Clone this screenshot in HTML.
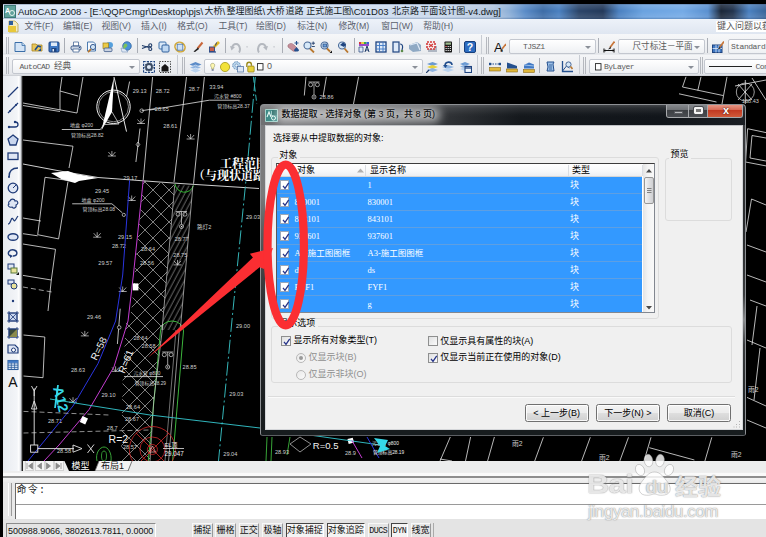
<!DOCTYPE html>
<html lang="zh-CN">
<head>
<meta charset="utf-8">
<title>AutoCAD 2008</title>
<style>
html,body{margin:0;padding:0;}
body{width:766px;height:537px;overflow:hidden;background:#000;position:relative;font-family:"Liberation Sans","Noto Sans CJK SC",sans-serif;font-size:9px;color:#000;}
div,span{box-sizing:border-box;}
.a{position:absolute;}
#title{position:absolute;left:2.5px;top:4px;width:763.5px;height:15px;background:linear-gradient(180deg,rgba(90,110,140,.55) 0,rgba(255,255,255,.12) 1.5px,rgba(255,255,255,0) 7px,rgba(255,255,255,.1) 13px,rgba(60,90,130,.35) 15px),linear-gradient(90deg,#dbe7f6 0,#d9e5f5 200px,#c9d8ec 440px,#b3c6de 490px,#8eb0d8 506px,#5a8cc8 522px,#3d6ca6 540px,#4a80c0 556px,#2a4468 576px,#23395a 600px,#4a80c0 616px,#6aa2e0 640px,#74aae6 680px,#5a90d0 705px,#1a2638 718px,#22344e 730px,#4a80c0 746px,#3a6498 763px);}
#title span{position:absolute;top:0;line-height:15px;font-size:9.5px;white-space:nowrap;color:#141a22;}
#title span.c{font-size:9px;}
#menu{position:absolute;left:2.5px;top:19px;width:763.5px;height:15px;background:linear-gradient(#edf2f9,#dfe6f1);}
#menu span{position:absolute;top:0;line-height:15px;font-size:8.8px;color:#59606c;white-space:nowrap;}
#tb{position:absolute;left:2.5px;top:34px;width:763.5px;height:42px;background:linear-gradient(#f6f7f9 0,#e9ebee 19px,#dcdfe4 20px,#f4f5f7 21px,#e6e8ec 40px,#c9ccd2 42px);}
.sepv{position:absolute;width:1px;background:#a9adb5;}
.grip{position:absolute;width:3px;border-left:1px solid #b5b8be;border-right:1px solid #b5b8be;}
.combo{position:absolute;background:linear-gradient(#ffffff,#eef0f3);border:1px solid #c3c7cf;border-radius:2px;font-family:"Liberation Mono","Noto Sans CJK SC",monospace;font-size:8px;letter-spacing:-.5px;color:#5a5a5a;white-space:nowrap;overflow:hidden;}
.combo b{font-weight:normal;font-size:8.6px;letter-spacing:0;}
.combo i{position:absolute;right:4px;top:6px;width:0;height:0;border-left:3px solid transparent;border-right:3px solid transparent;border-top:3px solid #8a8f98;}
#ltb{position:absolute;left:2.5px;top:76px;width:20.5px;height:395px;background:linear-gradient(90deg,#e8ebf0,#f3f5f8 14px,#fff 16px,#cfd3da 18px,#444 19px,#000 20px);}
#draw{position:absolute;left:23px;top:76px;width:743px;height:385px;background:#000;}
#tabs{position:absolute;left:23px;top:461px;width:743px;height:10px;background:#eceded;}
#sep{position:absolute;left:2.5px;top:471px;width:763px;height:11px;background:linear-gradient(#ececec 0,#efefef 2px,#fafafa 2.500px,#fafafa 4.500px,#8e8e8e 5px,#8e8e8e 6.500px,#f2f2f2 7px,#ececec 11px);}
#cmd{position:absolute;left:2.5px;top:482px;width:763px;height:37px;background:#e9e9e9;}
#status{position:absolute;left:2.5px;top:519px;width:763px;height:18px;background:#e4e4e4;}

#dlg{position:absolute;left:260px;top:104px;width:486px;height:331.5px;border-radius:4px 4px 3px 3px;border:1px solid #8d9094;border-bottom-color:#5c5f63;
 background:linear-gradient(180deg,rgba(255,255,255,.2) 0,rgba(255,255,255,.1) 3px,rgba(255,255,255,.02) 9px,rgba(255,255,255,0) 12px),linear-gradient(90deg,#707173 0,#6c6d70 24px,#4a4c50 120px,#2a2d31 200px,#14181c 260px,#11151a 400px,#1b1f24 486px);overflow:hidden;font-size:9px;}
#dlg .frameL{position:absolute;left:0;top:20px;width:3.5px;height:310px;background:linear-gradient(180deg,#7c7d7f 0,#7a7a7b 70px,#58595b 110px,#2c2e30 180px,#171b1d 300px);}
#dlg .frameR{position:absolute;right:0;top:20px;width:3.5px;height:310px;background:linear-gradient(180deg,#3c3d40 0,#2a2c2e 100px,#3a3c3e 170px,#8a8c8e 195px,#3a3c3e 220px,#1a1e20 300px);}
#dlg .frameB{position:absolute;left:0;bottom:0;width:486px;height:5px;background:#171c1e;}
#dcl{position:absolute;left:3.5px;top:20px;width:478px;height:305px;background:#f0f0f0;border:1px solid #d4d6d9;border-top-color:#c0c2c6;}
#dcl .t{position:absolute;white-space:nowrap;line-height:11px;font-size:9px;color:#000;}
#dcl .dis{color:#8f8f8f;}
.grp{position:absolute;border:1px solid #dcdcdc;border-radius:3px;}
.cb{position:absolute;width:10px;height:10px;border:1px solid #8e8f8f;background:linear-gradient(135deg,#dfe0e1,#fbfbfb);}
.cb.w{background:#fff;border-color:#9aa7b8;}
.cb svg{position:absolute;left:0;top:0;}
.rb{position:absolute;width:10px;height:10px;border:1px solid #b8b8b8;border-radius:50%;background:linear-gradient(135deg,#e8e8e8,#fbfbfb);}
.btn{position:absolute;height:18px;border:1px solid #707070;border-radius:2.5px;background:linear-gradient(#f3f3f3 0,#ececec 48%,#dedede 52%,#d0d0d0 100%);box-shadow:inset 0 0 0 1px rgba(255,255,255,.85);text-align:center;line-height:16px;font-size:9px;white-space:nowrap;color:#000;}
#lv{position:absolute;left:10.5px;top:36.5px;width:379px;height:150.5px;background:#fff;border:1px solid #828790;border-top-color:#3c3c3c;border-left-color:#5a5a5a;overflow:hidden;}
#lv .hd{position:absolute;left:0;top:0;width:365px;height:13px;background:linear-gradient(#fff,#f7f8fa 60%,#eceef2);border-bottom:1px solid #d5d5d5;}
#lv .row{position:absolute;left:0;width:364.5px;height:17px;background:#3399ff;border-bottom:1px solid #5e9fe2;}
#lv .row span{position:absolute;top:3px;line-height:11px;font-size:8.5px;color:#fff;white-space:nowrap;font-family:"Liberation Serif","Noto Sans CJK SC",serif;}
#lv .vl{position:absolute;top:13px;width:1px;height:137px;background:#5e9fe2;}
#lv .hl{position:absolute;top:1px;width:1px;height:11px;background:#dadde2;}
</style>
</head>
<body>
<div id="title"><span class="" style="left:15.4px">AutoCAD 2008 - [E:\QQPCmgr\Desktop\pjs\</span><span class="c" style="left:202.0px">大桥</span><span class="" style="left:220.0px">\</span><span class="c" style="left:224.0px">整理图纸</span><span class="" style="left:260.0px">\</span><span class="c" style="left:264.0px">大桥</span><span class="c" style="left:283.0px">道路</span><span class="c" style="left:303.8px">正式施工图</span><span class="" style="left:348.5px">\C01D03</span><span class="c" style="left:389.4px">北京路</span><span class="c" style="left:417.8px">平面设计图</span><span class="" style="left:462.5px">-v4.dwg]</span></div>
<div id="menu"><span style="left:22.0px">文件(F)</span><span style="left:60.5px">编辑(E)</span><span style="left:99.0px">视图(V)</span><span style="left:138.4px">插入(I)</span><span style="left:174.8px">格式(O)</span><span style="left:216.0px">工具(T)</span><span style="left:253.5px">绘图(D)</span><span style="left:294.8px">标注(N)</span><span style="left:335.9px">修改(M)</span><span style="left:378.7px">窗口(W)</span><span style="left:420.8px">帮助(H)</span></div>
<div id="tb"><div class="grip" style="left:3.5px;top:3.0px;height:17px"></div><svg class="a" style="left:11.5px;top:6.5px" width="12" height="12" viewBox="0 0 12 12"><path d="M1 1.5h7l3 3v6h-10z" fill="#d4e4f6" stroke="#3a6ea8"/><path d="M8 1.5v3h3" fill="#c5dbf2" stroke="#3a6ea8" stroke-width=".8"/></svg><svg class="a" style="left:28.0px;top:6.5px" width="12" height="12" viewBox="0 0 12 12"><path d="M1 3h4l1 1h5v6h-10z" fill="#e9c65a" stroke="#a88522" stroke-width=".8"/><path d="M4 9l3-4 3 1" fill="none" stroke="#1f4c8c" stroke-width="1.6"/><path d="M7 10l3 0 0-3z" fill="#1f4c8c"/></svg><svg class="a" style="left:45.0px;top:6.5px" width="12" height="12" viewBox="0 0 12 12"><rect x="1" y="1" width="10" height="10" rx="1" fill="#3f78c4" stroke="#1f4480"/><rect x="3" y="1.5" width="6" height="3.5" fill="#dfeaf8"/><rect x="3.5" y="7" width="5" height="4" fill="#1f4480"/><rect x="4.5" y="8" width="1.5" height="2.5" fill="#dfeaf8"/></svg><div class="sepv" style="left:61.5px;top:4.0px;height:15px"></div><svg class="a" style="left:67.0px;top:6.5px" width="12" height="12" viewBox="0 0 12 12"><path d="M3.5 1h5v4h-5z" fill="#fff" stroke="#4a6a98" stroke-width=".8"/><rect x="1" y="5" width="10" height="4" rx="1.5" fill="#c9d3e2" stroke="#3b5888"/><path d="M3 8h6v3h-6z" fill="#fff" stroke="#4a6a98" stroke-width=".8"/><circle cx="9.5" cy="6.5" r=".7" fill="#2c4e86"/></svg><svg class="a" style="left:83.0px;top:6.5px" width="12" height="12" viewBox="0 0 12 12"><path d="M1.5 1h6l2 2v7h-8z" fill="#f4f8fd" stroke="#3a6ea8" stroke-width=".9"/><circle cx="7" cy="6" r="2.6" fill="#cfe3f6" stroke="#3b5d91"/><path d="M5 8.2l-3 3" stroke="#b8772e" stroke-width="1.7"/></svg><svg class="a" style="left:99.5px;top:6.5px" width="12" height="12" viewBox="0 0 12 12"><ellipse cx="7.5" cy="4" rx="3.5" ry="3" fill="#55a0dd"/><rect x="1" y="2" width="5.5" height="5.5" fill="#edcb45" stroke="#9d7f1c" stroke-width=".7"/><rect x="2" y="7" width="8" height="3.6" rx="1" fill="#c9d3e2" stroke="#3b5888" stroke-width=".8"/></svg><svg class="a" style="left:117.0px;top:6.5px" width="12" height="12" viewBox="0 0 12 12"><circle cx="7" cy="5" r="4.3" fill="#4a93d8" stroke="#2a5a9a" stroke-width=".7"/><path d="M5 2.5c2 0 3 1.5 2 3s-2 1-2.5 3c-1.5-1-2-4 .5-6z" fill="#7dc25b"/><path d="M1 7l4 1 3 3h-6z" fill="#dfe9f6" stroke="#7b93b8" stroke-width=".6"/></svg><div class="sepv" style="left:134.0px;top:4.0px;height:15px"></div><svg class="a" style="left:138.0px;top:6.5px" width="12" height="12" viewBox="0 0 12 12"><path d="M1 4.5l7 2M1 7.5l7-2.5" stroke="#1f3b68" stroke-width="1.1" fill="none"/><circle cx="9.3" cy="4.3" r="1.5" fill="none" stroke="#1f3b68" stroke-width="1.1"/><circle cx="9.3" cy="8" r="1.5" fill="none" stroke="#1f3b68" stroke-width="1.1"/></svg><svg class="a" style="left:155.0px;top:6.5px" width="12" height="12" viewBox="0 0 12 12"><rect x="1" y="1" width="7" height="7" rx="1" fill="#dbe9f8" stroke="#3a6ea8"/><rect x="4" y="4" width="7" height="7" rx="1" fill="#bfd8f2" stroke="#2f5f9c"/></svg><svg class="a" style="left:171.5px;top:6.5px" width="12" height="12" viewBox="0 0 12 12"><ellipse cx="6" cy="6" rx="5.2" ry="4.6" fill="none" stroke="#d2a93a" stroke-width="1.6" transform="rotate(35 6 6)"/><rect x="3.2" y="3.2" width="5.6" height="6" fill="#cfe2f5" stroke="#4a76ac" stroke-width=".8"/></svg><svg class="a" style="left:189.0px;top:6.5px" width="12" height="12" viewBox="0 0 12 12"><path d="M10.5 1.5l-5 6" stroke="#c8663a" stroke-width="2"/><path d="M6 6.5l-4.5 4 1.5.5 4-3z" fill="#222"/></svg><svg class="a" style="left:205.5px;top:6.5px" width="12" height="12" viewBox="0 0 12 12"><path d="M11 1l-5 5" stroke="#e3b928" stroke-width="2.6"/><path d="M8.5 1.5l-1 3" stroke="#2b3e66" stroke-width="1"/><rect x="1.5" y="6" width="5" height="4.5" fill="#c85f4a" stroke="#2b4a86" stroke-width=".9"/><path d="M1 11h7" stroke="#2b4a86" stroke-width="1.2"/></svg><div class="sepv" style="left:222.0px;top:4.0px;height:15px"></div><svg class="a" style="left:227.0px;top:6.5px" width="12" height="12" viewBox="0 0 12 12"><path d="M2 7c1-5 7-6 8 1 0 2-.5 3-1 3.5" fill="none" stroke="#b4b8bf" stroke-width="2"/><path d="M0 5l5 1-3.5 3.5z" fill="#b4b8bf"/></svg><svg class="a" style="left:243.0px;top:6.5px" width="5" height="12" viewBox="0 0 12 12"><path d="M0 5h5l-2.500 3z" fill="#b4b8bf"/></svg><svg class="a" style="left:253.5px;top:6.5px" width="12" height="12" viewBox="0 0 12 12"><path d="M10 7c-1-5-7-6-8 1 0 2 .5 3 1 3.5" fill="none" stroke="#b4b8bf" stroke-width="2" transform="translate(0 0)"/><path d="M12 5l-5 1 3.5 3.5z" fill="#b4b8bf"/></svg><svg class="a" style="left:270.5px;top:6.5px" width="5" height="12" viewBox="0 0 12 12"><path d="M0 5h5l-2.500 3z" fill="#b4b8bf"/></svg><div class="sepv" style="left:279.5px;top:4.0px;height:15px"></div><svg class="a" style="left:284.0px;top:6.5px" width="12" height="12" viewBox="0 0 12 12"><path d="M1 4c2-2 4-2 6 0l3 3c1 2-2 4-4 3l-5-4z" fill="#c58f9a" stroke="#9a6470" stroke-width=".6"/><path d="M7 9l2.500-3 2.500 3c0 2-5 2-5 0z" fill="#24508e"/><path d="M9.500 0v4M7.500 2h4" stroke="#24508e" stroke-width="1.1"/></svg><svg class="a" style="left:300.5px;top:6.5px" width="12" height="12" viewBox="0 0 12 12"><circle cx="4.500" cy="4.500" r="3.500" fill="#d6e8f8" stroke="#4a6a98" stroke-width="1.100"/><path d="M7 7.500l4 4" stroke="#b8772e" stroke-width="1.800"/><path d="M8.500 2.200h3.500M10.200 .5v3.400M8.800 5.500h3" stroke="#1f3b68" stroke-width=".9"/></svg><svg class="a" style="left:317.0px;top:6.5px" width="12" height="12" viewBox="0 0 12 12"><circle cx="4.500" cy="4.500" r="3.500" fill="#d6e8f8" stroke="#4a6a98" stroke-width="1.100"/><rect x="3" y="3" width="3.500" height="3" fill="#6fa1d8" stroke="#1f4480" stroke-width=".7"/><path d="M7 7.500l3 3" stroke="#b8772e" stroke-width="1.800"/><path d="M9.500 12h2.500v-2.500z" fill="#111"/></svg><svg class="a" style="left:334.0px;top:6.5px" width="12" height="12" viewBox="0 0 12 12"><circle cx="5" cy="4.500" r="3.500" fill="#d6e8f8" stroke="#4a6a98" stroke-width="1.100"/><path d="M3 4l3-2.500 3 2-2 2.500z" fill="#1f4480"/><path d="M7.500 7.500l3.500 4" stroke="#b8772e" stroke-width="1.800"/></svg><div class="sepv" style="left:351.0px;top:4.0px;height:15px"></div><svg class="a" style="left:355.5px;top:6.5px" width="12" height="12" viewBox="0 0 12 12"><rect x="1" y="1" width="2.500" height="2" fill="#d43a3a"/><rect x="3.500" y="1" width="2.500" height="2" fill="#e8d23a"/><rect x="6" y="1" width="2.500" height="2" fill="#3aa84a"/><rect x="8.500" y="1" width="2.500" height="2" fill="#3a5fd4"/><rect x="1" y="3" width="10" height="2" fill="#9a4ac8"/><path d="M1 6h4v5h-4z" fill="#dfe9f6" stroke="#27467c" stroke-width=".7"/><path d="M7 11l2-6 2 6M7.800 9h2.500" fill="none" stroke="#1f3b68" stroke-width="1"/></svg><svg class="a" style="left:372.0px;top:6.5px" width="12" height="12" viewBox="0 0 12 12"><rect x="1" y="1" width="10" height="10" fill="#dfeaf8" stroke="#1f4480" stroke-width="1.300"/><path d="M4.500 1v10M8 1v10M1 4.500h10M1 8h10" stroke="#3f78c4" stroke-width=".9"/></svg><svg class="a" style="left:389.0px;top:6.5px" width="12" height="12" viewBox="0 0 12 12"><rect x="1" y="1" width="6" height="10" fill="#dfeaf8" stroke="#1f4480" stroke-width="1.200"/><path d="M8 3c3 0 3 3 2 6" fill="none" stroke="#1f4480" stroke-width="1.200"/><circle cx="10" cy="10" r="1.300" fill="#5a8a4a"/></svg><svg class="a" style="left:406.0px;top:6.5px" width="12" height="12" viewBox="0 0 12 12"><path d="M0 4l8-3 4 3v6l-8 1-4-3z" fill="#8fa9c4"/><path d="M1 4l7-2 3 7" stroke="#dfe9f6" stroke-width="1.200" fill="none"/></svg><svg class="a" style="left:423.0px;top:6.5px" width="12" height="12" viewBox="0 0 12 12"><rect x="2" y="5" width="9" height="6" fill="#aeb6c2"/><path d="M1 1h8v7h-8z" fill="#f8f0f0" stroke="#d23a3a" stroke-width="1.600" stroke-dasharray="2 1"/><path d="M3 3l4 3M7 3l-4 3" stroke="#d23a3a" stroke-width="1.300"/></svg><svg class="a" style="left:439.5px;top:6.5px" width="12" height="12" viewBox="0 0 12 12"><rect x="2.500" y=".5" width="7.500" height="11" rx=".8" fill="#1b1b1b"/><rect x="3.500" y="1.500" width="5.500" height="2.200" fill="#9ab88a"/><path d="M3.500 5.500h5.500M3.500 7.500h5.500M3.500 9.500h5.500" stroke="#d8d8d8" stroke-width="1" stroke-dasharray="1.300 .8"/><path d="M3.500 5.500h1.300" stroke="#d23a3a" stroke-width="1"/></svg><div class="sepv" style="left:456.0px;top:4.0px;height:15px"></div><svg class="a" style="left:461.0px;top:6.5px" width="12" height="12" viewBox="0 0 12 12"><rect x=".5" y=".5" width="11" height="11" rx="1.500" fill="#2d6cc0" stroke="#173f7c"/><text x="6" y="10" font-family="Liberation Sans,sans-serif" font-weight="bold" font-size="10.500" fill="#fff" text-anchor="middle">?</text></svg><div class="sepv" style="left:478.5px;top:1px;height:19px;background:#c8ccd3"></div><div class="grip" style="left:483.5px;top:3.0px;height:17px"></div><svg class="a" style="left:491.0px;top:6.5px" width="12" height="12" viewBox="0 0 12 12"><text x="0" y="10.500" font-family="Liberation Sans,sans-serif" font-size="13" fill="#111">A</text><path d="M12 3l-4 5" stroke="#c8763a" stroke-width="1.600"/><path d="M8 8l-2 2.500 3-1z" fill="#222"/></svg><div class="combo" style="left:506.0px;top:4.5px;width:87.0px;height:15px;line-height:13px;"><span style="position:absolute;left:13.5px;top:0">TJSZ1</span><i></i></div><div class="sepv" style="left:595.5px;top:4.0px;height:15px"></div><svg class="a" style="left:600.5px;top:6.5px" width="12" height="12" viewBox="0 0 12 12"><path d="M1 9.500h10M1 7.500v4M11 7.500v4" stroke="#111" stroke-width="1.100"/><path d="M1 9.500l2-1v2zM11 9.500l-2-1v2z" fill="#111"/><path d="M11.500 .5l-4.500 6" stroke="#c8763a" stroke-width="1.700"/><path d="M7.500 5.500l-2.500 3 3-1z" fill="#222"/></svg><div class="combo" style="left:615.5px;top:4.5px;width:87.0px;height:15px;line-height:13px;"><span style="position:absolute;left:13.5px;top:0"><b>尺寸标注－平面</b></span><i></i></div><div class="sepv" style="left:704.5px;top:4.0px;height:15px"></div><svg class="a" style="left:709.0px;top:6.5px" width="12" height="12" viewBox="0 0 12 12"><rect x=".5" y="4" width="9.500" height="7.500" fill="#3f78c4" stroke="#1f4480"/><path d="M.5 7.500h9.500M4 4v7.500M7 4v7.500" stroke="#dfeaf8" stroke-width=".8"/><path d="M12 .5l-4.500 6" stroke="#c8763a" stroke-width="1.700"/><path d="M8 5.500l-2.500 3 3-1z" fill="#222"/></svg><div class="combo" style="left:725.0px;top:4.5px;width:60.0px;height:15px;line-height:13px;"><span style="position:absolute;left:2.5px;top:0">Standard</span><i></i></div><div class="grip" style="left:3.5px;top:23.0px;height:17px"></div><div class="combo" style="left:9.0px;top:24.5px;width:128.0px;height:15px;line-height:13px;"><span style="position:absolute;left:7.0px;top:0">AutoCAD <b>经典</b></span><i></i></div><svg class="a" style="left:140.0px;top:26.5px" width="12" height="12" viewBox="0 0 12 12"><rect x=".5" y=".5" width="11" height="11" fill="#dfe9f6" stroke="#1f4480" stroke-width="1.200" stroke-dasharray="2.200 1.100"/><circle cx="6" cy="6" r="3" fill="none" stroke="#3a4a62" stroke-width="1.800"/><circle cx="6" cy="6" r="4.300" fill="none" stroke="#3a4a62" stroke-width="1" stroke-dasharray="1.500 1.500"/></svg><svg class="a" style="left:156.5px;top:26.5px" width="12" height="12" viewBox="0 0 12 12"><rect x=".5" y=".5" width="11" height="11" fill="#e9edf2" stroke="#333" stroke-width="1" stroke-dasharray="1.300 1.300"/><path d="M2.500 6l3.500-3 3.500 3v4.500h-7z" fill="#151515"/></svg><div class="sepv" style="left:174.5px;top:21px;height:19px;background:#c8ccd3"></div><div class="grip" style="left:179.0px;top:23.0px;height:17px"></div><svg class="a" style="left:186.5px;top:26.5px" width="13" height="12" viewBox="0 0 12 12"><path d="M6 1l6 2.500-6 2.500-6-2.500z" fill="#5c8cc8"/><path d="M6 4l6 2.500-6 2.500-6-2.500z" fill="#8fb4e0" stroke="#fff" stroke-width=".5"/><path d="M6 7l6 2.500-6 2.500-6-2.500z" fill="#b9d2ee" stroke="#fff" stroke-width=".5"/></svg><div class="combo" style="left:201.5px;top:24.5px;width:219.0px;height:15px;line-height:13px;"><span style="position:absolute;left:62.0px;top:0"><b style="font-family:Liberation Sans,sans-serif;font-size:9px">0</b></span><svg class="a" style="left:5.0px;top:1.0px" width="8" height="12" viewBox="0 0 12 12"><path d="M4 0.500c-4 0-3.500 4.500-1.500 6.500v2h3v-2c2-2 2.500-6.500-1.500-6.500z" fill="#fdf7b0" stroke="#8a8a5a" stroke-width=".8"/><rect x="2.500" y="9.500" width="3" height="2" fill="#5a6a8a"/></svg><svg class="a" style="left:15.0px;top:1.0px" width="11" height="12" viewBox="0 0 12 12"><circle cx="5.500" cy="6" r="5" fill="#f2e23a" stroke="#a89a1a" stroke-width=".9"/></svg><svg class="a" style="left:27.0px;top:1.0px" width="12" height="12" viewBox="0 0 12 12"><circle cx="4.500" cy="4.500" r="3.800" fill="#bcd6ec" stroke="#5a86b4" stroke-width="1" stroke-dasharray="1.500 1"/><circle cx="4.500" cy="4.500" r="1.500" fill="#eaf2fa" stroke="#5a86b4" stroke-width=".6"/><rect x="5.500" y="5.500" width="6" height="5.500" fill="#dfe9f6" stroke="#5a7aa8" stroke-width=".8"/></svg><svg class="a" style="left:40.0px;top:1.0px" width="11" height="12" viewBox="0 0 12 12"><path d="M2 6v-2.500c0-3.500 5-3.500 5 0v1" fill="none" stroke="#9a8a1a" stroke-width="1.500"/><rect x="3" y="5" width="7" height="6.500" rx="1" fill="#e8d23a" stroke="#8a7a1a" stroke-width=".8"/></svg><svg class="a" style="left:52.0px;top:1.0px" width="9" height="12" viewBox="0 0 12 12"><rect x=".5" y="1.500" width="7.500" height="8.500" fill="#fff" stroke="#111" stroke-width="1.100"/></svg><i></i></div><svg class="a" style="left:423.0px;top:26.5px" width="12" height="12" viewBox="0 0 12 12"><path d="M6.500 1l5.500 2-5.500 2-5.500-2z" fill="#6a9ad2"/><path d="M6.500 4l5.500 2-5.500 2-5.500-2z" fill="#e8d23a"/><path d="M6.500 7l5.500 2-5.500 2-5.500-2z" fill="#8fb4e0"/><path d="M0 12l3-3" stroke="#1f3b68" stroke-width="1.200"/></svg><svg class="a" style="left:439.5px;top:26.5px" width="12" height="12" viewBox="0 0 12 12"><path d="M6 4l6 2-6 2-6-2z" fill="#8fb4e0"/><path d="M6 7l6 2-6 2-6-2z" fill="#b9d2ee"/><path d="M3 5c0-5 7-5 7-1" fill="none" stroke="#1f4c8c" stroke-width="1.600"/><path d="M1 4l2.500 3 2-3z" fill="#1f4c8c"/></svg><svg class="a" style="left:457.0px;top:26.5px" width="12" height="12" viewBox="0 0 12 12"><path d="M5 1l5 2-5 2-5-2z" fill="#6a9ad2"/><path d="M5 3.500l5 2-5 2-5-2z" fill="#8fb4e0"/><path d="M5 6l5 2-5 2-5-2z" fill="#b9d2ee"/><rect x="5" y="5.500" width="6.500" height="6" fill="#eef4fb" stroke="#1f4480" stroke-width="1.100"/><path d="M5 7h6.500" stroke="#1f4480" stroke-width="1.300"/></svg><div class="sepv" style="left:474.5px;top:21px;height:19px;background:#c8ccd3"></div><div class="grip" style="left:478.0px;top:23.0px;height:17px"></div><svg class="a" style="left:486.5px;top:26.5px" width="12" height="12" viewBox="0 0 12 12"><path d="M1 3h10" stroke="#1f4c8c" stroke-width="1.200" stroke-dasharray="1.500 1"/><rect x="0" y="1.800" width="2.200" height="2.400" fill="#1f4c8c"/><rect x="9.800" y="1.800" width="2.200" height="2.400" fill="#1f4c8c"/><rect x="0.500" y="6.500" width="11" height="3.500" fill="#e0b83a" stroke="#8a6a1a" stroke-width=".6"/></svg><svg class="a" style="left:503.5px;top:26.5px" width="12" height="12" viewBox="0 0 12 12"><path d="M1 1.500l10 3.500v2.500h-10z" fill="#24508e"/><rect x="0.500" y="8" width="11" height="3" fill="#e0b83a" stroke="#8a6a1a" stroke-width=".6"/></svg><svg class="a" style="left:520.0px;top:26.5px" width="12" height="12" viewBox="0 0 12 12"><path d="M1 4l5-2.500 5 2v4h-10z" fill="#3f78c4"/><path d="M1 4l10 1" stroke="#9cc0e8" stroke-width="1"/><rect x="0.500" y="8.500" width="11" height="3" fill="#e0b83a" stroke="#8a6a1a" stroke-width=".6"/></svg><div class="sepv" style="left:536.5px;top:24.0px;height:15px"></div><svg class="a" style="left:541.0px;top:26.5px" width="12" height="12" viewBox="0 0 12 12"><path d="M3 1h7l-1 2 1 7h-7l1-4z" fill="#9cc0e8" stroke="#24508e" stroke-width="1"/><path d="M5 4h3M5 6h3M5 8h3" stroke="#24508e" stroke-width=".8"/></svg><svg class="a" style="left:558.0px;top:26.5px" width="12" height="12" viewBox="0 0 12 12"><path d="M1.500 0v10.500h10.500" fill="none" stroke="#24508e" stroke-width="1.300"/><path d="M1.500 10l4-5 3 2" fill="none" stroke="#24508e" stroke-width="1"/><circle cx="7.500" cy="3.500" r="2.600" fill="#d6e8f8" stroke="#4a6a98" stroke-width="1"/><path d="M9.500 5.500l2 2.500" stroke="#b8772e" stroke-width="1.600"/></svg><div class="sepv" style="left:576.5px;top:21px;height:19px;background:#c8ccd3"></div><div class="grip" style="left:580.0px;top:23.0px;height:17px"></div><div class="combo" style="left:586.0px;top:24.5px;width:110.0px;height:15px;line-height:13px;"><span style="position:absolute;left:14.5px;top:0">ByLayer</span><svg class="a" style="left:5.0px;top:1.0px" width="9" height="12" viewBox="0 0 12 12"><rect x=".5" y="1.500" width="7.500" height="8.500" fill="#fff" stroke="#111" stroke-width="1.100"/></svg><i></i></div><div class="grip" style="left:697.0px;top:23.0px;height:17px"></div><div class="combo" style="left:701.0px;top:24.5px;width:80.0px;height:15px;line-height:13px;"><span style="position:absolute;left:51.0px;top:0">Con</span><div class="a" style="left:4px;top:6px;width:43px;height:1px;background:#222"></div><i></i></div></div>
<div class="a" style="left:716px;top:21px;width:50px;height:11px;background:#fff;font-size:9px;line-height:11px;color:#555;white-space:nowrap;overflow:hidden;padding-left:1px">键入问题以获取帮助</div>
<svg class="a" style="left:8px;top:20px" width="12" height="13" viewBox="0 0 12 13"><path d="M1 1h6l3 3v8h-9z" fill="#f4ecc0" stroke="#b8a24a" stroke-width=".8"/><rect x="1" y="1" width="4" height="4" fill="#2d5d9c"/><rect x="0" y="6" width="8" height="6" fill="#e8c83a"/></svg>
<svg class="a" style="left:4px;top:5px" width="12" height="13" viewBox="0 0 12 13"><rect width="12" height="13" fill="#3d7a78"/><rect x="1" y="1" width="10" height="11" fill="#5fa29c"/><text x="1" y="8" font-size="7" font-family="Liberation Sans,sans-serif" fill="#fff" font-weight="bold">A</text><circle cx="8" cy="8" r="2.500" fill="none" stroke="#e8f4f0" stroke-width="1"/></svg>
<div id="ltb"><svg class="a" style="left:4px;top:9.6px" width="12" height="12" viewBox="0 0 12 12"><path d="M1 11l10-10" stroke="#1f3b78" stroke-width="1.300"/></svg><svg class="a" style="left:4px;top:25.7px" width="12" height="12" viewBox="0 0 12 12"><path d="M1 11l10-10" stroke="#1f3b78" stroke-width="1.300"/><circle cx="3" cy="9" r="1" fill="#1f3b78"/><circle cx="9" cy="3" r="1" fill="#1f3b78"/></svg><svg class="a" style="left:4px;top:41.8px" width="12" height="12" viewBox="0 0 12 12"><path d="M2 9h6c4 0 4-5 0-5" fill="none" stroke="#1f3b78" stroke-width="1.300"/><circle cx="2" cy="9" r="1.200" fill="#1f3b78"/><circle cx="8" cy="4" r="1.200" fill="#1f3b78"/></svg><svg class="a" style="left:4px;top:57.9px" width="12" height="12" viewBox="0 0 12 12"><path d="M6 1l5 4-2 6h-6l-2-6z" fill="#c9d6ee" stroke="#1f3b78" stroke-width="1.300"/></svg><svg class="a" style="left:4px;top:74.0px" width="12" height="12" viewBox="0 0 12 12"><rect x="1" y="3" width="10" height="6.500" fill="#dfe6f4" stroke="#1f3b78" stroke-width="1.300"/></svg><svg class="a" style="left:4px;top:90.1px" width="12" height="12" viewBox="0 0 12 12"><path d="M2 11c0-6 3-9 9-9" fill="none" stroke="#1f3b78" stroke-width="1.400"/><circle cx="2" cy="11" r="1" fill="#1f3b78"/></svg><svg class="a" style="left:4px;top:106.2px" width="12" height="12" viewBox="0 0 12 12"><circle cx="6" cy="6" r="4.800" fill="#dfe6f4" stroke="#1f3b78" stroke-width="1.300"/><path d="M6 6l3-3" stroke="#1f3b78" stroke-width="1"/></svg><svg class="a" style="left:4px;top:122.3px" width="12" height="12" viewBox="0 0 12 12"><path d="M3 3c1-3 5-2 5 0 3-1 4 3 1 4 1 3-3 4-4 2-3 1-5-2-3-3-1-1 0-3 1-3z" fill="#dfe6f4" stroke="#1f3b78" stroke-width="1.100"/></svg><svg class="a" style="left:4px;top:138.4px" width="12" height="12" viewBox="0 0 12 12"><path d="M1 10c3 0 3-8 5-5s1 3 5-3" fill="none" stroke="#1f3b78" stroke-width="1.200"/></svg><svg class="a" style="left:4px;top:154.5px" width="12" height="12" viewBox="0 0 12 12"><ellipse cx="6" cy="6" rx="5" ry="3.300" fill="#dfe6f4" stroke="#1f3b78" stroke-width="1.400"/></svg><svg class="a" style="left:4px;top:170.6px" width="12" height="12" viewBox="0 0 12 12"><path d="M3 9c-4-3 0-7 4-6s4 6-1 6" fill="none" stroke="#1f3b78" stroke-width="1.400"/><path d="M3 7.500l0 3.500 3-2z" fill="#1f3b78"/></svg><svg class="a" style="left:4px;top:186.7px" width="12" height="12" viewBox="0 0 12 12"><rect x="1" y="1" width="6" height="5" fill="#dfe6f4" stroke="#1f3b78"/><rect x="4" y="5" width="6" height="5" fill="#e8e29a" stroke="#5a7a3a"/><path d="M9 12h3v-3z" fill="#111"/></svg><svg class="a" style="left:4px;top:202.8px" width="12" height="12" viewBox="0 0 12 12"><rect x="1" y="1" width="6" height="4" fill="#dfe6f4" stroke="#1f3b78"/><circle cx="7" cy="7" r="3" fill="#e8e29a" stroke="#1f3b78"/></svg><svg class="a" style="left:4px;top:218.9px" width="12" height="12" viewBox="0 0 12 12"><circle cx="6" cy="6" r="1.200" fill="#1f3b78"/></svg><svg class="a" style="left:4px;top:235.0px" width="12" height="12" viewBox="0 0 12 12"><rect x="2" y="2" width="8" height="8" fill="#c9d6ee" stroke="#1f3b78"/><path d="M2 2l8 8M10 2l-8 8M0 2h12M0 10h12M2 0v12M10 0v12" stroke="#1f3b78" stroke-width=".8"/></svg><svg class="a" style="left:4px;top:251.1px" width="12" height="12" viewBox="0 0 12 12"><rect x="2" y="2" width="8" height="8" fill="#3a4a3a" stroke="#1f3b78"/><path d="M0 2h12M0 10h12M2 0v12M10 0v12" stroke="#1f3b78" stroke-width=".8"/><path d="M2 10l8-8v8z" fill="#8a8a4a"/></svg><svg class="a" style="left:4px;top:267.2px" width="12" height="12" viewBox="0 0 12 12"><path d="M1 2h7l3 3v5h-10z" fill="#dfe6f4" stroke="#1f3b78" stroke-width="1.200"/><circle cx="6.500" cy="7" r="2" fill="#fff" stroke="#1f3b78"/></svg><svg class="a" style="left:4px;top:283.3px" width="12" height="12" viewBox="0 0 12 12"><rect x="1" y="1.500" width="10" height="9" fill="#dfeaf8" stroke="#2d5d9c" stroke-width="1.100"/><path d="M1 4h10M1 6.200h10M1 8.400h10M4.300 1.500v9M7.600 1.500v9" stroke="#2d5d9c" stroke-width=".8"/><rect x="1" y="1.500" width="10" height="2.300" fill="#3f78c4"/></svg><svg class="a" style="left:4px;top:299.4px" width="12" height="12" viewBox="0 0 12 12"><text x="6" y="11.500" font-family="Liberation Sans,sans-serif" font-size="14" fill="#111" text-anchor="middle">A</text></svg></div>
<div id="draw"><svg width="743" height="385" viewBox="23 76 743 385" style="position:absolute;left:0;top:0" font-family="Liberation Sans,Noto Sans CJK SC,sans-serif"><defs><pattern id="xh" width="16" height="16" patternUnits="userSpaceOnUse" patternTransform="translate(1 6)"><path d="M0 0l16 16M16 0l-16 16" stroke="#b4b4b4" stroke-width=".7" fill="none"/></pattern><pattern id="dh" width="4.500" height="4.500" patternUnits="userSpaceOnUse" patternTransform="rotate(-62)"><path d="M0 2h4.500" stroke="#9c9c9c" stroke-width=".65"/></pattern></defs><polygon points="143,181 175,184.500 162,330 154,401 150,461 121,461 122.700,378 126,321 131.400,311" fill="url(#xh)"/><polygon points="175,184.500 193,186 180.300,330 162,330" fill="url(#dh)"/><polyline points="62.0,77.0 60.0,91.0 78.0,96.0" fill="none" stroke="#e6e6e6" stroke-width="0.8" /><polyline points="83.0,77.0 77.0,113.0" fill="none" stroke="#e6e6e6" stroke-width="0.8" /><polyline points="60.0,91.0 60.0,110.0" fill="none" stroke="#e6e6e6" stroke-width="0.8" /><polyline points="23.0,103.0 77.0,113.0" fill="none" stroke="#e6e6e6" stroke-width="0.8" /><polyline points="23.0,105.5 60.0,111.5" fill="none" stroke="#e6e6e6" stroke-width="0.8" /><polyline points="23.0,140.0 73.0,146.2 69.0,168.0" fill="none" stroke="#e6e6e6" stroke-width="0.8" /><polyline points="23.0,164.0 60.0,171.0 98.0,177.5 180.0,183.5 259.0,188.5" fill="none" stroke="#e6e6e6" stroke-width="0.9" /><circle cx="113.500" cy="106.800" r="16.700" fill="none" stroke="#f2f2f2" stroke-width="1"/><circle cx="113.500" cy="106.800" r="15" fill="none" stroke="#e0e0e0" stroke-width=".6"/><polygon points="114,77 101.400,130.500 112,112" fill="#fff"/><polyline points="114.0,77.0 126.5,131.6" fill="none" stroke="#fff" stroke-width="0.9" /><polyline points="112.0,112.0 119.0,124.0 105.0,124.5" fill="none" stroke="#eee" stroke-width="0.7" /><polyline points="129.6,81.5 126.5,97.0" fill="none" stroke="#e6e6e6" stroke-width="0.8" /><polygon points="51,173 68,171 76,174 98,178 79,181 75,183 62,179.500" fill="#fff"/><polyline points="152.6,77.0 143.2,180.0" fill="none" stroke="#e6e6e6" stroke-width="0.8" /><polyline points="186.5,77.0 174.0,182.0" fill="none" stroke="#e6e6e6" stroke-width="0.8" /><polyline points="204.4,77.0 193.5,183.7" fill="none" stroke="#e6e6e6" stroke-width="0.8" /><polyline points="141.7,110.7 155.7,108.6" fill="none" stroke="#e6e6e6" stroke-width="0.8" /><circle cx="141.700" cy="110.700" r="1.800" fill="none" stroke="#ddd" stroke-width=".7"/><polyline points="140.0,128.5 135.9,162.0" fill="none" stroke="#e6e6e6" stroke-width="0.8" /><path d="M138 142l1.800 2.500-1.800 2.500-1.800-2.500z" fill="none" stroke="#ddd" stroke-width=".7"/><polyline points="150.0,110.0 209.3,100.2 239.5,100.2" fill="none" stroke="#e6e6e6" stroke-width="0.8" /><text x="70.0" y="127.0" font-size="5" fill="#cfcfcf" >地盒 φ200</text><polyline points="61.8,129.5 100.4,129.5 104.0,124.0" fill="none" stroke="#e6e6e6" stroke-width="0.8" /><text x="71.0" y="137.0" font-size="5" fill="#cfcfcf" >管顶标高28.82</text><text x="81.6" y="201.6" font-size="5" fill="#cfcfcf" >地盒 φ200</text><polyline points="72.2,203.8 111.9,203.8 122.3,212.8" fill="none" stroke="#e6e6e6" stroke-width="0.8" /><text x="82.6" y="211.0" font-size="5" fill="#cfcfcf" >管顶标高28.08</text><circle cx="123.800" cy="214.900" r="1.600" fill="none" stroke="#ddd" stroke-width=".7"/><text x="214.0" y="98.0" font-size="5" fill="#cfcfcf" >污水管 #800</text><text x="217.3" y="108.3" font-size="5" fill="#cfcfcf" >管顶标高28.37</text><text x="132.7" y="93.0" font-size="5.6" fill="#cfcfcf" >29.13</text><text x="155.7" y="93.0" font-size="5.6" fill="#cfcfcf" >28.72</text><text x="188.7" y="91.4" font-size="5.6" fill="#cfcfcf" >28.7</text><text x="209.3" y="89.0" font-size="5.6" fill="#cfcfcf" >33.94</text><text x="154.8" y="111.4" font-size="5.6" fill="#cfcfcf" >28.65</text><text x="163.3" y="127.6" font-size="5.6" fill="#cfcfcf" >28.61</text><text x="123.3" y="180.4" font-size="5.6" fill="#cfcfcf" >29.17</text><text x="95.0" y="192.5" font-size="5.6" fill="#cfcfcf" >29.45</text><text x="118.0" y="239.0" font-size="5.6" fill="#cfcfcf" >29.15</text><text x="111.9" y="248.0" font-size="5.6" fill="#cfcfcf" >28.72</text><text x="141.0" y="251.0" font-size="5.6" fill="#cfcfcf" >28.64</text><text x="98.3" y="265.0" font-size="5.6" fill="#cfcfcf" >29.57</text><text x="140.0" y="265.0" font-size="5.6" fill="#cfcfcf" >28.56</text><text x="246.0" y="219.0" font-size="5.6" fill="#cfcfcf" >29.03</text><text x="174.7" y="240.7" font-size="5.6" fill="#cfcfcf" >28.77</text><text x="173.3" y="257.0" font-size="5.6" fill="#cfcfcf" >28.75</text><text x="197.0" y="229.0" font-size="5.6" fill="#cfcfcf" >路灯2</text><text x="236.0" y="328.0" font-size="5.6" fill="#cfcfcf" >29.00</text><text x="229.3" y="396.2" font-size="5.6" fill="#cfcfcf" >29.03</text><text x="223.3" y="456.0" font-size="5.6" fill="#cfcfcf" >29.04</text><text x="87.0" y="318.8" font-size="5.6" fill="#cfcfcf" >29.46</text><text x="71.0" y="372.0" font-size="5.6" fill="#cfcfcf" >28.63</text><text x="48.0" y="423.0" font-size="5.6" fill="#cfcfcf" >28.71</text><text x="101.5" y="397.4" font-size="5.6" fill="#cfcfcf" >29.10</text><text x="106.8" y="430.0" font-size="5.6" fill="#cfcfcf" >28.7</text><text x="57.0" y="453.0" font-size="5.6" fill="#cfcfcf" >28.58</text><text x="182.6" y="369.2" font-size="5.6" fill="#cfcfcf" >28.85</text><text x="133.5" y="340.3" font-size="5.6" fill="#cfcfcf" >28.64</text><text x="141.6" y="347.6" font-size="5.6" fill="#cfcfcf" >28.58</text><text x="125.0" y="421.0" font-size="5.6" fill="#cfcfcf" >28.67</text><text x="123.0" y="449.0" font-size="5.6" fill="#cfcfcf" >28.57</text><text x="126.0" y="409.0" font-size="5.6" fill="#cfcfcf" >28.64</text><g transform="translate(141.0 121.0)"><path d="M-4 2.500h8M0 2.500v-5M0 2.500l-3.500-4M0 2.500l3.500-4" stroke="#d8d8d8" stroke-width=".7" fill="none"/></g><g transform="translate(111.9 153.5)"><path d="M-4 2.500h8M0 2.500v-5M0 2.500l-3.500-4M0 2.500l3.500-4" stroke="#d8d8d8" stroke-width=".7" fill="none"/></g><g transform="translate(190.6 136.5)"><path d="M-4 2.500h8M0 2.500v-5M0 2.500l-3.500-4M0 2.500l3.500-4" stroke="#d8d8d8" stroke-width=".7" fill="none"/></g><g transform="translate(131.7 198.0)"><path d="M-4 2.500h8M0 2.500v-5M0 2.500l-3.500-4M0 2.500l3.500-4" stroke="#d8d8d8" stroke-width=".7" fill="none"/></g><g transform="translate(97.2 234.7)"><path d="M-4 2.500h8M0 2.500v-5M0 2.500l-3.500-4M0 2.500l3.500-4" stroke="#d8d8d8" stroke-width=".7" fill="none"/></g><g transform="translate(177.5 262.4)"><path d="M-4 2.500h8M0 2.500v-5M0 2.500l-3.500-4M0 2.500l3.500-4" stroke="#d8d8d8" stroke-width=".7" fill="none"/></g><g transform="translate(122.7 289.0)"><path d="M-4 2.500h8M0 2.500v-5M0 2.500l-3.500-4M0 2.500l3.500-4" stroke="#d8d8d8" stroke-width=".7" fill="none"/></g><g transform="translate(84.8 333.4)"><path d="M-4 2.500h8M0 2.500v-5M0 2.500l-3.500-4M0 2.500l3.500-4" stroke="#d8d8d8" stroke-width=".7" fill="none"/></g><g transform="translate(115.6 368.9)"><path d="M-4 2.500h8M0 2.500v-5M0 2.500l-3.500-4M0 2.500l3.500-4" stroke="#d8d8d8" stroke-width=".7" fill="none"/></g><g transform="translate(73.0 399.7)"><path d="M-4 2.500h8M0 2.500v-5M0 2.500l-3.500-4M0 2.500l3.500-4" stroke="#d8d8d8" stroke-width=".7" fill="none"/></g><polyline points="45.0,177.3 37.7,234.7 58.6,238.9 68.0,181.5" fill="none" stroke="#e6e6e6" stroke-width="0.8" /><polyline points="45.0,177.3 68.0,180.4" fill="none" stroke="#e6e6e6" stroke-width="0.8" /><polyline points="23.0,218.0 40.9,221.0" fill="none" stroke="#e6e6e6" stroke-width="0.8" /><polyline points="23.0,233.7 37.7,235.8" fill="none" stroke="#e6e6e6" stroke-width="0.8" /><polyline points="23.0,244.0 55.5,249.3 51.3,280.0 23.0,275.4" fill="none" stroke="#e6e6e6" stroke-width="0.8" /><polyline points="51.3,280.0 48.0,311.0" fill="none" stroke="#e6e6e6" stroke-width="0.8" /><polyline points="23.0,287.0 52.0,292.0" fill="none" stroke="#ddd" stroke-width="0.7" stroke-dasharray="5 3"/><polyline points="23.5,335.0 44.8,337.0 43.0,377.7 23.5,376.0" fill="none" stroke="#e6e6e6" stroke-width="0.8" /><polyline points="129.6,180.4 122.7,275.0 115.6,321.0 98.0,363.6 73.0,406.0 41.0,445.0 28.0,461.0" fill="none" stroke="#2a35e0" stroke-width="1" /><polyline points="143.2,180.4 133.4,275.0 128.0,321.0 113.9,367.0 89.0,409.6 59.0,445.0 44.0,461.0" fill="none" stroke="#c43cd0" stroke-width="1" /><path d="M175 184a9.500 9.500 0 0 0 18.500 1.500" fill="none" stroke="#2fb52f" stroke-width="1"/><path d="M148.300 461L160.500 331a11.500 10 0 0 1 23 0L172.600 461" fill="none" stroke="#3db53d" stroke-width="1"/><polyline points="163.0,324.0 153.7,401.0 150.0,461.0" fill="none" stroke="#ccc" stroke-width="0.7" /><polyline points="179.3,330.8 168.6,461.0" fill="none" stroke="#ccc" stroke-width="0.7" /><polyline points="176.0,330.0 165.0,461.0" fill="none" stroke="#bbb" stroke-width="0.6" /><polyline points="174.7,185.6 162.0,330.0" fill="none" stroke="#ccc" stroke-width="0.7" /><polyline points="192.9,185.6 180.3,330.0" fill="none" stroke="#ccc" stroke-width="0.7" /><g transform="translate(181.5 214.5)"><path d="M-5.500 -3h11M0 -3v13" stroke="#ddd" stroke-width=".7" fill="none"/><circle cx="-3.400" cy="-.3" r="2" fill="none" stroke="#ddd" stroke-width=".7"/><circle cx="3.400" cy="-.3" r="2" fill="none" stroke="#ddd" stroke-width=".7"/><circle cx="0" cy="12" r="2" fill="none" stroke="#ddd" stroke-width=".7"/><circle cx="0" cy="12" r=".7" fill="#ddd"/></g><g transform="translate(167.7 355.0)"><path d="M-5.500 -3h11M0 -3v13" stroke="#ddd" stroke-width=".7" fill="none"/><circle cx="-3.400" cy="-.3" r="2" fill="none" stroke="#ddd" stroke-width=".7"/><circle cx="3.400" cy="-.3" r="2" fill="none" stroke="#ddd" stroke-width=".7"/><circle cx="0" cy="12" r="2" fill="none" stroke="#ddd" stroke-width=".7"/><circle cx="0" cy="12" r=".7" fill="#ddd"/></g><g transform="translate(314.0 85.0)"><path d="M-5.500 -3h11M0 -3v13" stroke="#ddd" stroke-width=".7" fill="none"/><circle cx="-3.400" cy="-.3" r="2" fill="none" stroke="#ddd" stroke-width=".7"/><circle cx="3.400" cy="-.3" r="2" fill="none" stroke="#ddd" stroke-width=".7"/><circle cx="0" cy="12" r="2" fill="none" stroke="#ddd" stroke-width=".7"/><circle cx="0" cy="12" r=".7" fill="#ddd"/></g><text x="319.6" y="99.0" font-size="5.6" fill="#cfcfcf" >28.86</text><polyline points="255.3,77.0 246.0,180.0 232.0,320.0 218.5,461.0" fill="none" stroke="#35b5b8" stroke-width="1" stroke-dasharray="14 3 2 3"/><polyline points="253.4,76.8 256.8,104.0" fill="none" stroke="#35b5b8" stroke-width="1" stroke-dasharray="6 3"/><text x="220.0" y="167.5" font-size="12" fill="#fff" font-family="Noto Serif CJK SC,serif" font-weight="bold">工程范围</text><text x="193.0" y="180.0" font-size="12" fill="#fff" font-family="Noto Serif CJK SC,serif" font-weight="bold">（与现状道路</text><rect x="132.800" y="283.400" width="5.600" height="7" fill="#fff"/><rect x="81" y="417" width="6" height="6.500" fill="#fff" transform="rotate(25 84 420)"/><rect x="348" y="438.500" width="5.500" height="5" fill="#fff" transform="rotate(-15 350 441)"/><polyline points="120.2,308.7 117.4,344.0" fill="none" stroke="#e6e6e6" stroke-width="0.8" /><circle cx="119.200" cy="327.400" r="1.800" fill="#000" stroke="#ddd" stroke-width=".7"/><text x="0.0" y="0.0" font-size="10" fill="#f2f2f2" transform="translate(96.500 361) rotate(-64)">R=58</text><text x="0.0" y="0.0" font-size="10" fill="#f2f2f2" transform="translate(124.500 374) rotate(-68)">R=61</text><text x="108.6" y="442.5" font-size="10.5" fill="#f2f2f2" >R=2</text><text x="312.8" y="449.0" font-size="9.5" fill="#f2f2f2" >R=0.5</text><text x="0.0" y="0.0" font-size="14" fill="#35d8e8" transform="translate(53 388) rotate(76)" font-weight="bold">A12</text><polyline points="50.0,399.0 150.0,415.0 260.0,428.0 384.0,445.5" fill="none" stroke="#35c8d0" stroke-width="0.9" /><polyline points="58.0,385.0 55.0,408.0" fill="none" stroke="#35d8e8" stroke-width="1.8" /><polyline points="23.5,411.4 108.6,415.0" fill="none" stroke="#ccc" stroke-width="0.7" stroke-dasharray="5 3"/><polyline points="23.5,433.0 150.0,430.0" fill="none" stroke="#ccc" stroke-width="0.7" stroke-dasharray="5 3"/><text x="133.5" y="374.6" font-size="4.8" fill="#cfcfcf" >污水管 φ800</text><polyline points="124.0,376.6 163.0,376.6" fill="none" stroke="#e6e6e6" stroke-width="0.8" /><text x="134.8" y="384.6" font-size="4.8" fill="#cfcfcf" >管顶标高28.29</text><polyline points="34.2,445.0 34.2,388.4" fill="none" stroke="#e8e8e8" stroke-width="0.9" /><rect x="30.600" y="445" width="7.200" height="7.200" fill="none" stroke="#e8e8e8" stroke-width=".9"/><polyline points="37.7,448.6 74.0,448.6" fill="none" stroke="#e8e8e8" stroke-width="0.9" /><path d="M73 445l9 3.600-9 3.600z" fill="none" stroke="#e8e8e8" stroke-width=".9"/><path d="M31.500 409l2.700-8 2.700 8z" fill="none" stroke="#e8e8e8" stroke-width=".9"/><polyline points="31.5,386.0 34.2,391.0 37.0,386.0" fill="none" stroke="#e8e8e8" stroke-width="0.9" /><polyline points="34.2,391.0 34.2,396.0" fill="none" stroke="#e8e8e8" stroke-width="0.9" /><polyline points="87.5,444.5 94.0,453.0" fill="none" stroke="#e8e8e8" stroke-width="0.9" /><polyline points="94.0,444.5 87.5,453.0" fill="none" stroke="#e8e8e8" stroke-width="0.9" /><circle cx="152.400" cy="449.500" r="23" fill="none" stroke="#d42a2a" stroke-width=".8"/><circle cx="152.400" cy="449.500" r="12.5" fill="none" stroke="#d42a2a" stroke-width=".8"/><circle cx="152.400" cy="449.500" r="5" fill="none" stroke="#d42a2a" stroke-width=".8"/><polyline points="136.0,433.0 169.0,466.0" fill="none" stroke="#d42a2a" stroke-width="0.8" /><polyline points="169.0,433.0 136.0,466.0" fill="none" stroke="#d42a2a" stroke-width="0.8" /><path d="M149.500 452l3-6 3 6z" fill="none" stroke="#f0a0a0" stroke-width=".8"/><text x="164.5" y="446.6" font-size="5.8" fill="#eee" >EL顶</text><polyline points="163.0,448.5 184.0,448.5" fill="none" stroke="#e6e6e6" stroke-width="0.8" /><text x="164.5" y="456.0" font-size="6.3" fill="#eee" >29.047</text><path d="M97 461c-2-8 3-14 7-14s8 6 7 14" fill="none" stroke="#3db53d" stroke-width=".9"/><ellipse cx="104" cy="456" rx="2.500" ry="5" fill="none" stroke="#3db53d" stroke-width=".8"/><polyline points="267.0,437.0 266.0,461.0" fill="none" stroke="#3db53d" stroke-width="0.9" /><polyline points="272.0,437.0 271.0,461.0" fill="none" stroke="#3db53d" stroke-width="0.9" /><polyline points="290.0,437.0 287.0,455.0" fill="none" stroke="#3db53d" stroke-width="0.9" /><polygon points="290,444 300,437 311,444 300,452" fill="none" stroke="#ccc" stroke-width=".7"/><polyline points="351.8,440.4 362.0,458.0" fill="none" stroke="#c43cd0" stroke-width="1" /><polyline points="367.0,437.0 379.0,458.0" fill="none" stroke="#2a35e0" stroke-width="1" /><text x="372.0" y="445.0" font-size="4.8" fill="#eee" >污水管 φ800</text><text x="373.0" y="453.6" font-size="4.8" fill="#eee" >管顶标高28.19</text><path d="M374 438l14 2-3 6 5 3-13 4 3-7z" fill="#35d8e8"/><text x="275.0" y="454.0" font-size="5.6" fill="#cfcfcf" >28.93</text><text x="345.0" y="454.5" font-size="5.6" fill="#cfcfcf" >28.9</text><polyline points="450.3,437.0 440.0,461.0" fill="none" stroke="#e6e6e6" stroke-width="0.8" /><polyline points="470.6,437.0 465.5,461.0" fill="none" stroke="#e6e6e6" stroke-width="0.8" /><polyline points="494.4,437.0 487.6,461.0" fill="none" stroke="#e6e6e6" stroke-width="0.8" /><polyline points="543.4,437.3 534.7,461.0" fill="none" stroke="#e6e6e6" stroke-width="0.8" /><polyline points="590.3,437.3 581.6,461.0" fill="none" stroke="#e6e6e6" stroke-width="0.8" /><polyline points="628.5,437.3 619.8,461.0" fill="none" stroke="#e6e6e6" stroke-width="0.8" /><polyline points="651.0,437.3 644.0,461.0" fill="none" stroke="#e6e6e6" stroke-width="0.8" /><polyline points="649.3,447.7 694.4,460.0" fill="none" stroke="#e6e6e6" stroke-width="0.8" /><polyline points="711.8,437.3 704.9,461.0" fill="none" stroke="#e6e6e6" stroke-width="0.8" /><polyline points="440.0,459.0 452.0,461.0" fill="none" stroke="#e6e6e6" stroke-width="0.8" /><text x="512.0" y="446.0" font-size="6.8" fill="#cfcfcf" >雨2</text><text x="599.0" y="459.5" font-size="6.8" fill="#cfcfcf" >雨2</text><text x="731.0" y="456.6" font-size="6.8" fill="#cfcfcf" >雨2</text><text x="748.0" y="392.4" font-size="6.8" fill="#cfcfcf" >雨2</text><polyline points="306.0,76.8 304.3,95.5" fill="none" stroke="#e6e6e6" stroke-width="0.8" /><polyline points="326.4,76.8 323.0,97.0" fill="none" stroke="#e6e6e6" stroke-width="0.8" /><polyline points="358.6,76.8 353.5,104.0" fill="none" stroke="#e6e6e6" stroke-width="0.8" /><polyline points="686.0,76.8 682.5,87.0 723.0,95.5" fill="none" stroke="#e6e6e6" stroke-width="0.8" /><polyline points="701.0,76.8 697.8,90.4" fill="none" stroke="#e6e6e6" stroke-width="0.8" /><polyline points="679.0,93.8 716.5,102.0" fill="none" stroke="#e6e6e6" stroke-width="0.8" /><polyline points="727.0,76.8 722.0,104.0" fill="none" stroke="#e6e6e6" stroke-width="0.8" /><circle cx="745.300" cy="92" r="9" fill="none" stroke="#ddd" stroke-width=".7"/><polyline points="738.0,84.0 752.0,100.0" fill="none" stroke="#e6e6e6" stroke-width="0.8" /><polyline points="752.0,84.0 738.0,100.0" fill="none" stroke="#e6e6e6" stroke-width="0.8" /><polyline points="745.3,80.0 745.3,104.0" fill="none" stroke="#e6e6e6" stroke-width="0.8" /><text x="742.0" y="102.5" font-size="5.5" fill="#cfcfcf" >168.43</text><polyline points="735.0,86.0 766.0,80.0" fill="none" stroke="#e6e6e6" stroke-width="0.8" /><polyline points="752.0,78.0 766.0,100.0" fill="none" stroke="#e6e6e6" stroke-width="0.8" /><polyline points="766.0,132.6 747.6,128.7 745.6,162.0 766.0,165.9" fill="none" stroke="#e6e6e6" stroke-width="0.8" /><polyline points="766.0,138.0 752.0,135.5 750.0,158.0 766.0,161.0" fill="none" stroke="#e6e6e6" stroke-width="0.8" /><polyline points="766.0,205.0 751.5,199.0 746.0,232.0" fill="none" stroke="#e6e6e6" stroke-width="0.8" /><polyline points="747.0,245.0 766.0,252.0" fill="none" stroke="#e6e6e6" stroke-width="0.8" /><polyline points="766.0,282.0 747.0,275.0" fill="none" stroke="#e6e6e6" stroke-width="0.8" /><polyline points="750.0,300.0 766.0,306.0" fill="none" stroke="#e6e6e6" stroke-width="0.8" /><polyline points="747.0,340.0 766.0,348.0" fill="none" stroke="#e6e6e6" stroke-width="0.8" /><polyline points="757.0,306.0 752.0,345.0" fill="none" stroke="#e6e6e6" stroke-width="0.8" /><polyline points="747.0,397.4 766.0,406.0" fill="none" stroke="#e6e6e6" stroke-width="0.8" /><polyline points="747.0,420.0 766.0,428.0" fill="none" stroke="#e6e6e6" stroke-width="0.8" /><polyline points="760.0,348.0 754.0,400.0" fill="none" stroke="#e6e6e6" stroke-width="0.8" /></svg></div>
<div id="tabs"><div class="a" style="left:1.5px;top:0;width:9.5px;height:10px;border:1px solid #d2d2d2;border-top:none;background:#f4f4f4"></div><div class="a" style="left:12.0px;top:0;width:9.5px;height:10px;border:1px solid #d2d2d2;border-top:none;background:#f4f4f4"></div><div class="a" style="left:21.5px;top:0;width:9.5px;height:10px;border:1px solid #d2d2d2;border-top:none;background:#f4f4f4"></div><div class="a" style="left:31.0px;top:0;width:9.5px;height:10px;border:1px solid #d2d2d2;border-top:none;background:#f4f4f4"></div><svg class="a" style="left:0;top:0" width="140" height="10" viewBox="23 461 140 10"><path d="M27 463v6M32.500 463l-4 3 4 3zM41.500 463l-4 3 4 3zM46.500 463l4 3-4 3zM56 463l4 3-4 3zM61 463v6" fill="#8a8a8a" stroke="#8a8a8a" stroke-width=".8"/><path d="M64.500 461h34.500l-4 10h-26z" fill="#000"/><path d="M99 461l-4 10h33l4-10" fill="#f4f4f4" stroke="#555" stroke-width=".8"/><text x="71.500" y="469.300" font-size="9" fill="#fff" font-family="Liberation Sans,Noto Sans CJK SC,sans-serif">模型</text><text x="101" y="469.300" font-size="9" fill="#111" font-family="Liberation Sans,Noto Sans CJK SC,sans-serif">布局1</text></svg></div>
<div id="sep"></div>
<div id="cmd"><div class="a" style="left:5.500px;top:1px;width:4px;height:33px;border-left:1px solid #fff;border-right:1px solid #9a9a9a;background:#e4e4e4"></div><div class="a" style="left:12px;top:1px;width:751px;height:36px;background:#fff;border-top:1px solid #6a6a6a;border-left:1px solid #6a6a6a;"></div><div class="a" style="left:13px;top:21.500px;width:750px;height:1px;background:#9a9a9a"></div><div class="a" style="left:14px;top:3px;font-size:10px;line-height:12px;letter-spacing:1.300px;color:#222;font-family:'Liberation Mono','Noto Sans CJK SC',monospace">命令:</div></div>
<div id="status"><div class="a" style="left:3px;top:3.500px;width:150px;height:15px;border-top:1px solid #8c8c8c;border-left:1px solid #8c8c8c;border-right:1px solid #fff;font-size:9px;line-height:14px;padding-left:1.500px;white-space:nowrap;color:#111;letter-spacing:-.05px">500988.9066, 3802613.7811, 0.0000</div><div class="a" style="left:189.5px;top:3.500px;width:20.5px;height:15px;line-height:13px;text-align:center;font-size:9px;white-space:nowrap;color:#111;border:1px solid #f8f8f8;border-right-color:#9a9a9a;border-bottom-color:#9a9a9a;">捕捉</div><div class="a" style="left:212.5px;top:3.500px;width:21.0px;height:15px;line-height:13px;text-align:center;font-size:9px;white-space:nowrap;color:#111;border:1px solid #f8f8f8;border-right-color:#9a9a9a;border-bottom-color:#9a9a9a;">栅格</div><div class="a" style="left:236.0px;top:3.500px;width:20.5px;height:15px;line-height:13px;text-align:center;font-size:9px;white-space:nowrap;color:#111;border:1px solid #f8f8f8;border-right-color:#9a9a9a;border-bottom-color:#9a9a9a;">正交</div><div class="a" style="left:259.5px;top:3.500px;width:21.0px;height:15px;line-height:13px;text-align:center;font-size:9px;white-space:nowrap;color:#111;border:1px solid #f8f8f8;border-right-color:#9a9a9a;border-bottom-color:#9a9a9a;">极轴</div><div class="a" style="left:283.0px;top:3.500px;width:38.5px;height:15px;line-height:13px;text-align:center;font-size:9px;white-space:nowrap;color:#111;border:1px solid #444;border-right-color:#fff;border-bottom-color:#fff;background:#f4f4f4;">对象捕捉</div><div class="a" style="left:324.0px;top:3.500px;width:38.5px;height:15px;line-height:13px;text-align:center;font-size:9px;white-space:nowrap;color:#111;border:1px solid #444;border-right-color:#fff;border-bottom-color:#fff;background:#f4f4f4;">对象追踪</div><div class="a" style="left:365.5px;top:3.500px;width:20.5px;height:15px;line-height:13px;text-align:center;font-size:9px;white-space:nowrap;color:#111;border:1px solid #f8f8f8;border-right-color:#9a9a9a;border-bottom-color:#9a9a9a;font-family:'Liberation Mono',monospace;font-size:8.300px;letter-spacing:-.45px;">DUCS</div><div class="a" style="left:388.5px;top:3.500px;width:17.0px;height:15px;line-height:13px;text-align:center;font-size:9px;white-space:nowrap;color:#111;border:1px solid #444;border-right-color:#fff;border-bottom-color:#fff;background:#f4f4f4;font-family:'Liberation Mono',monospace;font-size:8.300px;letter-spacing:-.45px;">DYN</div><div class="a" style="left:408.0px;top:3.500px;width:20.0px;height:15px;line-height:13px;text-align:center;font-size:9px;white-space:nowrap;color:#111;border:1px solid #f8f8f8;border-right-color:#9a9a9a;border-bottom-color:#9a9a9a;">线宽</div><div class="a" style="left:430px;top:4px;width:1px;height:14px;background:#aaa"></div></div>
<div id="dlg"><svg class="a" style="left:4px;top:3.500px" width="13" height="13" viewBox="0 0 13 13"><rect width="13" height="13" rx="1" fill="#3d8a86"/><rect x=".6" y=".6" width="11.800" height="11.800" fill="none" stroke="#bfe4dc" stroke-width=".8"/><path d="M2 8l2-5 2 5M7 2v5" stroke="#eafaf6" stroke-width="1.100" fill="none"/><circle cx="8.500" cy="9" r="2" fill="none" stroke="#eafaf6" stroke-width="1"/><rect x="7" y="1" width="5" height="5" fill="#2a6e6a"/></svg><div class="a" style="left:14px;top:2px;width:166px;height:16px;border-radius:8px;background:rgba(255,255,255,.55);filter:blur(4.500px)"></div><div class="a" style="left:20.500px;top:3px;line-height:13px;font-size:9px;white-space:nowrap;color:#0c0c0c;font-weight:500;text-shadow:0 0 3px rgba(255,255,255,.5)">数据提取 - 选择对象 (第 3 页，共 8 页)</div><div class="a" style="left:405px;top:-1px;width:77px;height:14px;border:1px solid #a8aaad;border-top:none;border-radius:0 0 3px 3px;overflow:hidden;background:#555"><div class="a" style="left:0;top:0;width:22px;height:13px;background:linear-gradient(#8a8d91 0,#6e7175 45%,#3d4044 50%,#4a4d52 100%);border-right:1px solid #a8aaad"></div><div class="a" style="left:22px;top:0;width:19px;height:13px;background:linear-gradient(#8a8d91 0,#6e7175 45%,#3d4044 50%,#4a4d52 100%);border-right:1px solid #a8aaad"></div><div class="a" style="left:41px;top:0;width:36px;height:13px;background:linear-gradient(#e8a090 0,#d86a55 45%,#c23a22 50%,#d05a3a 100%)"></div><div class="a" style="left:6.500px;top:7px;width:9px;height:3px;background:#b8babd;border:1px solid #5a5c60;border-radius:1px"></div><div class="a" style="left:27px;top:2.500px;width:9px;height:7px;border:2px solid #f4f4f4;border-top-width:2.500px;outline:1px solid #4a4c50;border-radius:1px;background:#777"></div><div class="a" style="left:41px;top:-1px;width:36px;height:14px;line-height:14px;text-align:center;color:#fff;font-weight:bold;font-size:11px;text-shadow:0 0 1px #5a1a10,0 0 2px #5a1a10;font-family:'Liberation Sans',sans-serif">x</div></div><div class="frameL"></div><div class="frameR"></div><div class="frameB"></div><div id="dcl"><div class="t " style="left:7.5px;top:7.2px">选择要从中提取数据的对象:</div><div class="grp" style="left:5.0px;top:30.5px;width:388.0px;height:162.0px"></div><div class="a" style="left:12.0px;top:24.0px;width:22px;height:10px;background:#f0f0f0"></div><div class="t " style="left:13.8px;top:23.5px">对象</div><div class="grp" style="left:399.5px;top:32.0px;width:67.0px;height:63.0px"></div><div class="a" style="left:403.0px;top:24.0px;width:22px;height:10px;background:#f0f0f0"></div><div class="t " style="left:405.0px;top:23.0px">预览</div><div class="grp" style="left:5.0px;top:200.0px;width:461.0px;height:57.0px"></div><div class="a" style="left:12.0px;top:193.0px;width:40px;height:10px;background:#f0f0f0"></div><div class="t " style="left:13.8px;top:191.9px">显示选项</div><div class="a" style="left:2.5px;top:269.5px;width:467px;height:1px;background:#dcdcdc"></div><div class="a" style="left:2.5px;top:270.5px;width:467px;height:1px;background:#fafafa"></div><div class="cb " style="left:15.5px;top:209.7px"><svg width="10" height="10" viewBox="0 0 10 10"><path d="M2 4.800l2 2.500 3.700-5.500" fill="none" stroke="#27358a" stroke-width="1.300"/></svg></div><div class="t " style="left:28.1px;top:209.2px">显示所有对象类型(T)</div><div class="cb " style="left:162.0px;top:210.0px"></div><div class="t " style="left:174.8px;top:209.5px">仅显示具有属性的块(A)</div><div class="cb " style="left:162.0px;top:226.6px"><svg width="10" height="10" viewBox="0 0 10 10"><path d="M2 4.800l2 2.500 3.700-5.500" fill="none" stroke="#27358a" stroke-width="1.300"/></svg></div><div class="t " style="left:174.8px;top:226.1px">仅显示当前正在使用的对象(D)</div><div class="rb" style="left:30.0px;top:226.8px"><div class="a" style="left:2px;top:2px;width:4px;height:4px;border-radius:50%;background:#9a9a9a"></div></div><div class="t dis" style="left:43.0px;top:226.3px">仅显示块(B)</div><div class="rb" style="left:30.0px;top:243.5px"></div><div class="t dis" style="left:43.0px;top:243.0px">仅显示非块(O)</div><div class="btn" style="left:259.5px;top:277.5px;width:63.5px">&lt; 上一步(B)</div><div class="btn" style="left:330.5px;top:277.5px;width:64.0px">下一步(N) &gt;</div><div class="btn" style="left:401.5px;top:277.5px;width:64.0px">取消(C)</div><svg class="a" style="right:1px;bottom:1px" width="8" height="8" viewBox="0 0 8 8"><path d="M6 1h1v1h-1zM6 4h1v1h-1zM3 4h1v1h-1zM6 6.500h1v1h-1zM3 6.500h1v1h-1zM0.500 6.500h1v1h-1z" fill="#b4b4b4"/></svg><div id="lv"><div class="hd"></div><div class="hl" style="left:15.5px"></div><div class="hl" style="left:88.0px"></div><div class="hl" style="left:291.0px"></div><div class="hl" style="left:365.0px"></div><div class="vl" style="left:15.5px"></div><div class="vl" style="left:88.0px"></div><div class="vl" style="left:291.0px"></div><div class="a" style="left:20.0px;top:1px;line-height:11px;font-size:9px;white-space:nowrap">对象</div><div class="a" style="left:93.0px;top:1px;line-height:11px;font-size:9px;white-space:nowrap">显示名称</div><div class="a" style="left:295.0px;top:1px;line-height:11px;font-size:9px;white-space:nowrap">类型</div><svg class="a" style="left:80.0px;top:4px" width="7" height="5" viewBox="0 0 7 5"><path d="M0 4.500l3.500-4 3.500 4z" fill="#b0b0b0"/></svg><div class="row" style="top:13.0px"><span style="left:17.5px">1</span><span style="left:90.5px">1</span><span style="left:293.0px;font-size:9px">块</span><div class="cb w" style="left:2.5px;top:3.500px;width:9.500px;height:9.500px"><svg width="10" height="10" viewBox="0 0 10 10"><path d="M2 4.800l2 2.500 3.700-5.500" fill="none" stroke="#27358a" stroke-width="1.300"/></svg></div></div><div class="row" style="top:30.0px"><span style="left:17.5px">830001</span><span style="left:90.5px">830001</span><span style="left:293.0px;font-size:9px">块</span><div class="cb w" style="left:2.5px;top:3.500px;width:9.500px;height:9.500px"><svg width="10" height="10" viewBox="0 0 10 10"><path d="M2 4.800l2 2.500 3.700-5.500" fill="none" stroke="#27358a" stroke-width="1.300"/></svg></div></div><div class="row" style="top:47.0px"><span style="left:17.5px">843101</span><span style="left:90.5px">843101</span><span style="left:293.0px;font-size:9px">块</span><div class="cb w" style="left:2.5px;top:3.500px;width:9.500px;height:9.500px"><svg width="10" height="10" viewBox="0 0 10 10"><path d="M2 4.800l2 2.500 3.700-5.500" fill="none" stroke="#27358a" stroke-width="1.300"/></svg></div></div><div class="row" style="top:64.0px"><span style="left:17.5px">937601</span><span style="left:90.5px">937601</span><span style="left:293.0px;font-size:9px">块</span><div class="cb w" style="left:2.5px;top:3.500px;width:9.500px;height:9.500px"><svg width="10" height="10" viewBox="0 0 10 10"><path d="M2 4.800l2 2.500 3.700-5.500" fill="none" stroke="#27358a" stroke-width="1.300"/></svg></div></div><div class="row" style="top:81.0px"><span style="left:17.5px">A3-施工图图框</span><span style="left:90.5px">A3-施工图图框</span><span style="left:293.0px;font-size:9px">块</span><div class="cb w" style="left:2.5px;top:3.500px;width:9.500px;height:9.500px"><svg width="10" height="10" viewBox="0 0 10 10"><path d="M2 4.800l2 2.500 3.700-5.500" fill="none" stroke="#27358a" stroke-width="1.300"/></svg></div></div><div class="row" style="top:98.0px"><span style="left:17.5px">ds</span><span style="left:90.5px">ds</span><span style="left:293.0px;font-size:9px">块</span><div class="cb w" style="left:2.5px;top:3.500px;width:9.500px;height:9.500px"><svg width="10" height="10" viewBox="0 0 10 10"><path d="M2 4.800l2 2.500 3.700-5.500" fill="none" stroke="#27358a" stroke-width="1.300"/></svg></div></div><div class="row" style="top:115.0px"><span style="left:17.5px">FYF1</span><span style="left:90.5px">FYF1</span><span style="left:293.0px;font-size:9px">块</span><div class="cb w" style="left:2.5px;top:3.500px;width:9.500px;height:9.500px"><svg width="10" height="10" viewBox="0 0 10 10"><path d="M2 4.800l2 2.500 3.700-5.500" fill="none" stroke="#27358a" stroke-width="1.300"/></svg></div></div><div class="row" style="top:132.0px"><span style="left:17.5px">g</span><span style="left:90.5px">g</span><span style="left:293.0px;font-size:9px">块</span><div class="cb w" style="left:2.5px;top:3.500px;width:9.500px;height:9.500px"><svg width="10" height="10" viewBox="0 0 10 10"><path d="M2 4.800l2 2.500 3.700-5.500" fill="none" stroke="#27358a" stroke-width="1.300"/></svg></div></div><div class="a" style="left:365.5px;top:0;width:12px;height:150px;background:linear-gradient(90deg,#e4e4e4,#f4f4f4 40%,#fafafa)"></div><div class="a" style="left:366.5px;top:13px;width:10.500px;height:27px;border:1px solid #979797;border-radius:2px;background:linear-gradient(90deg,#f4f4f4,#e0e0e2 50%,#cfd0d3)"></div><svg class="a" style="left:365.5px;top:0" width="14" height="150" viewBox="0 0 14 150"><path d="M3 8.500l3-3.500 3 3.500zM3 142l3 3.500 3-3.500z" fill="#4a4a4a"/><path d="M4 24.500h4.500M4 26.500h4.500M4 28.500h4.500" stroke="#6a6a6a" stroke-width=".8"/></svg></div></div></div>
<svg class="a" style="left:0;top:0;pointer-events:none" width="766" height="537" viewBox="0 0 766 537"><path d="M147.800 357.800L252.900 257.600L249.900 253.800L273 247.900L268 262L264 269L259.600 267.300Z" fill="#fb2e32"/><ellipse cx="285.700" cy="245" rx="18.200" ry="80.300" fill="none" stroke="#fb2e32" stroke-width="8.200"/></svg>
<div style="color:rgba(255,255,255,.8);text-shadow:0 0 1px rgba(110,110,110,.75),0 0 1.500px rgba(130,130,130,.5);white-space:nowrap;position:absolute;left:587px;top:470px;font-size:26.500px;line-height:28px;font-weight:bold;transform-origin:0 0;transform:scaleX(1.160);letter-spacing:-.5px;font-family:'Liberation Sans',sans-serif">Bai</div><svg class="a" style="left:632px;top:452px" width="44" height="46" viewBox="0 0 44 46"><g fill="rgba(255,255,255,.82)" stroke="rgba(140,140,140,.55)" stroke-width=".7"><ellipse cx="8" cy="18" rx="4.300" ry="5.800" transform="rotate(-25 8 18)"/><ellipse cx="16.500" cy="8.500" rx="4.300" ry="6.300" transform="rotate(-8 16.500 8.500)"/><ellipse cx="28" cy="8.500" rx="4.300" ry="6.300" transform="rotate(8 28 8.500)"/><ellipse cx="37" cy="18" rx="4.300" ry="5.800" transform="rotate(25 37 18)"/><path d="M22.500 20c6 0 9 5 13 10s4 12-3 13-7-1-10-1-4 2-10 1-7-8-3-13 7-10 13-10z"/></g></svg><div style="color:rgba(255,255,255,.8);text-shadow:0 0 1px rgba(110,110,110,.75),0 0 1.500px rgba(130,130,130,.5);white-space:nowrap;position:absolute;left:645.500px;top:476.500px;font-size:19px;line-height:20px;font-weight:bold;color:rgba(235,235,235,.9);letter-spacing:-.3px;font-family:'Liberation Sans',sans-serif">du</div><div style="color:rgba(255,255,255,.8);text-shadow:0 0 1px rgba(110,110,110,.75),0 0 1.500px rgba(130,130,130,.5);white-space:nowrap;position:absolute;left:675px;top:472px;font-size:23px;line-height:26px;font-weight:bold;font-family:'Noto Sans CJK SC',sans-serif">经验</div><div style="color:rgba(255,255,255,.8);text-shadow:0 0 1px rgba(110,110,110,.75),0 0 1.500px rgba(130,130,130,.5);white-space:nowrap;position:absolute;left:588px;top:502.500px;font-size:16.800px;line-height:17px;letter-spacing:-.3px;font-family:'Liberation Sans',sans-serif">jingyan.baidu.com</div></body>
</html>
